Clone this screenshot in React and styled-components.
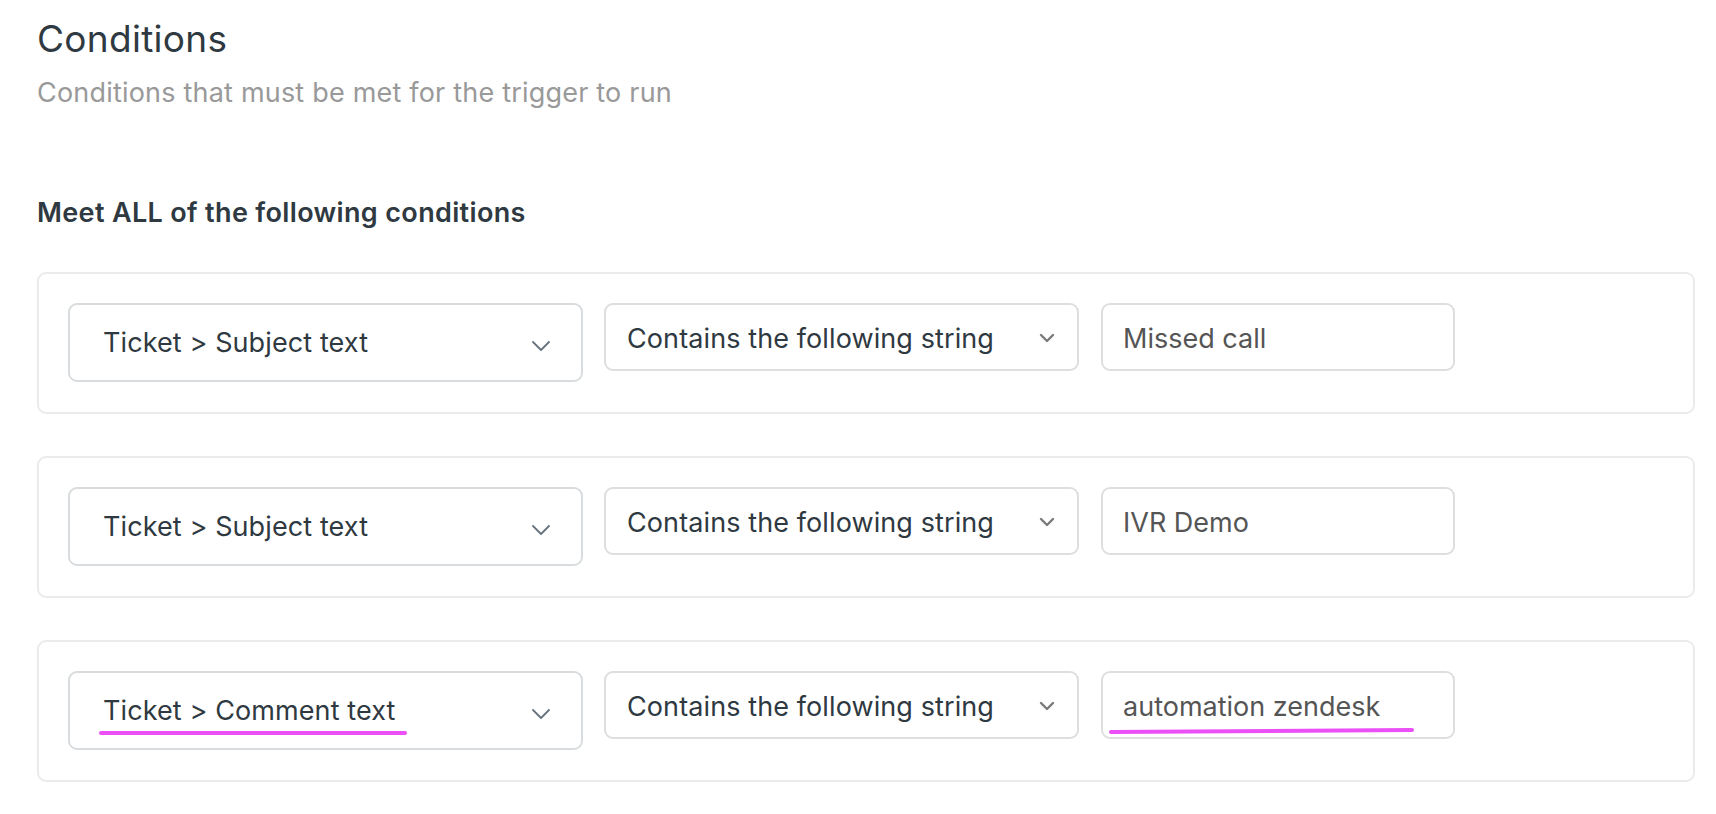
import React from "react";
import styled, { createGlobalStyle } from "styled-components";

const Global = createGlobalStyle`
  html, body { margin: 0; padding: 0; background: #fff; }
  body { font-family: Inter, "Noto Sans", "Liberation Sans", sans-serif; -webkit-font-smoothing: antialiased; }
  * { box-sizing: border-box; }
`;

const Page = styled.div`
  padding: 17px 21px 0 37px;
  width: 1716px;
`;

const Title = styled.h1`
  margin: 0;
  font-size: 37px;
  line-height: 44px;
  font-weight: 400;
  color: #2f3941;
  letter-spacing: 0.3px;
`;

const Subtitle = styled.p`
  margin: 16px 0 0;
  font-size: 27px;
  line-height: 32px;
  color: #999;
  letter-spacing: 0.2px;
`;

const GroupLabel = styled.h2`
  margin: 88px 0 0;
  font-size: 27px;
  line-height: 32px;
  font-weight: 600;
  color: #2f3941;
  letter-spacing: 0.35px;
`;

const List = styled.div`
  margin-top: 43px;
  display: flex;
  flex-direction: column;
  gap: 42px;
`;

const Card = styled.div`
  border: 2px solid #ebebeb;
  border-radius: 9px;
  padding: 29px 29px 30px;
  display: flex;
  align-items: flex-start;
`;

const FieldSelect = styled.div`
  width: 515px;
  height: 79px;
  border: 2px solid #d8dcde;
  border-radius: 9px;
  display: flex;
  align-items: center;
  justify-content: space-between;
  padding: 0 30px 0 33px;
  font-size: 27px;
  letter-spacing: 0.1px;
  color: #2f3941;
  flex: none;
`;

const OperatorSelect = styled.div`
  margin-left: 21px;
  width: 475px;
  height: 68px;
  border: 2px solid #dedede;
  border-radius: 9px;
  display: flex;
  align-items: center;
  justify-content: space-between;
  padding: 4px 22px 0 21px;
  font-size: 27px;
  letter-spacing: 0.1px;
  color: #2f3941;
  flex: none;
`;

const ValueInput = styled.div`
  margin-left: 22px;
  width: 354px;
  height: 68px;
  border: 2px solid #dedede;
  border-radius: 9px;
  display: flex;
  align-items: center;
  padding: 4px 20px 0 20px;
  font-size: 27px;
  color: #555;
  flex: none;
`;

const Label = styled.span`
  position: relative;
  display: inline-block;
  line-height: 32px;
  white-space: nowrap;
  ${(p) =>
    p.$marked &&
    `
    &::after {
      content: "";
      position: absolute;
      left: ${p.$markLeft}px;
      right: ${p.$markRight}px;
      bottom: ${p.$markBottom}px;
      height: 4px;
      border-radius: 2px;
      background: #ea50f6;
      transform: rotate(${p.$tilt || 0}deg);
    }
  `}
`;

const Chevron = styled.svg`
  flex: none;
  margin-top: ${(p) => p.$shift}px;
`;

const ChevronDown = ({ w, h, color, stroke, shift }) => (
  <Chevron $shift={shift} width={w + 4} height={h + 4} viewBox={`0 0 ${w + 4} ${h + 4}`}>
    <polyline
      points={`2,2 ${w / 2 + 2},${h + 2} ${w + 2},2`}
      fill="none"
      stroke={color}
      strokeWidth={stroke}
      strokeLinecap="round"
      strokeLinejoin="round"
    />
  </Chevron>
);

const rows = [
  { field: "Ticket > Subject text", value: "Missed call" },
  { field: "Ticket > Subject text", value: "IVR Demo" },
  { field: "Ticket > Comment text", value: "automation zendesk", marked: true },
];

export default function App() {
  return (
    <>
      <Global />
      <Page>
        <Title>Conditions</Title>
        <Subtitle>Conditions that must be met for the trigger to run</Subtitle>
        <GroupLabel>Meet ALL of the following conditions</GroupLabel>
        <List>
          {rows.map((r, i) => (
            <Card key={i}>
              <FieldSelect>
                <Label $marked={r.marked} $markLeft={-4} $markRight={-12} $markBottom={-8}>
                  {r.field}
                </Label>
                <ChevronDown w={16} h={8} color="#68737d" stroke={1.8} shift={7} />
              </FieldSelect>
              <OperatorSelect>
                <Label>Contains the following string</Label>
                <ChevronDown w={12} h={6} color="#7a7a7a" stroke={2.4} shift={-3} />
              </OperatorSelect>
              <ValueInput>
                <Label $marked={r.marked} $markLeft={-14} $markRight={-34} $markBottom={-10} $tilt={-0.4}>
                  {r.value}
                </Label>
              </ValueInput>
            </Card>
          ))}
        </List>
      </Page>
    </>
  );
}
